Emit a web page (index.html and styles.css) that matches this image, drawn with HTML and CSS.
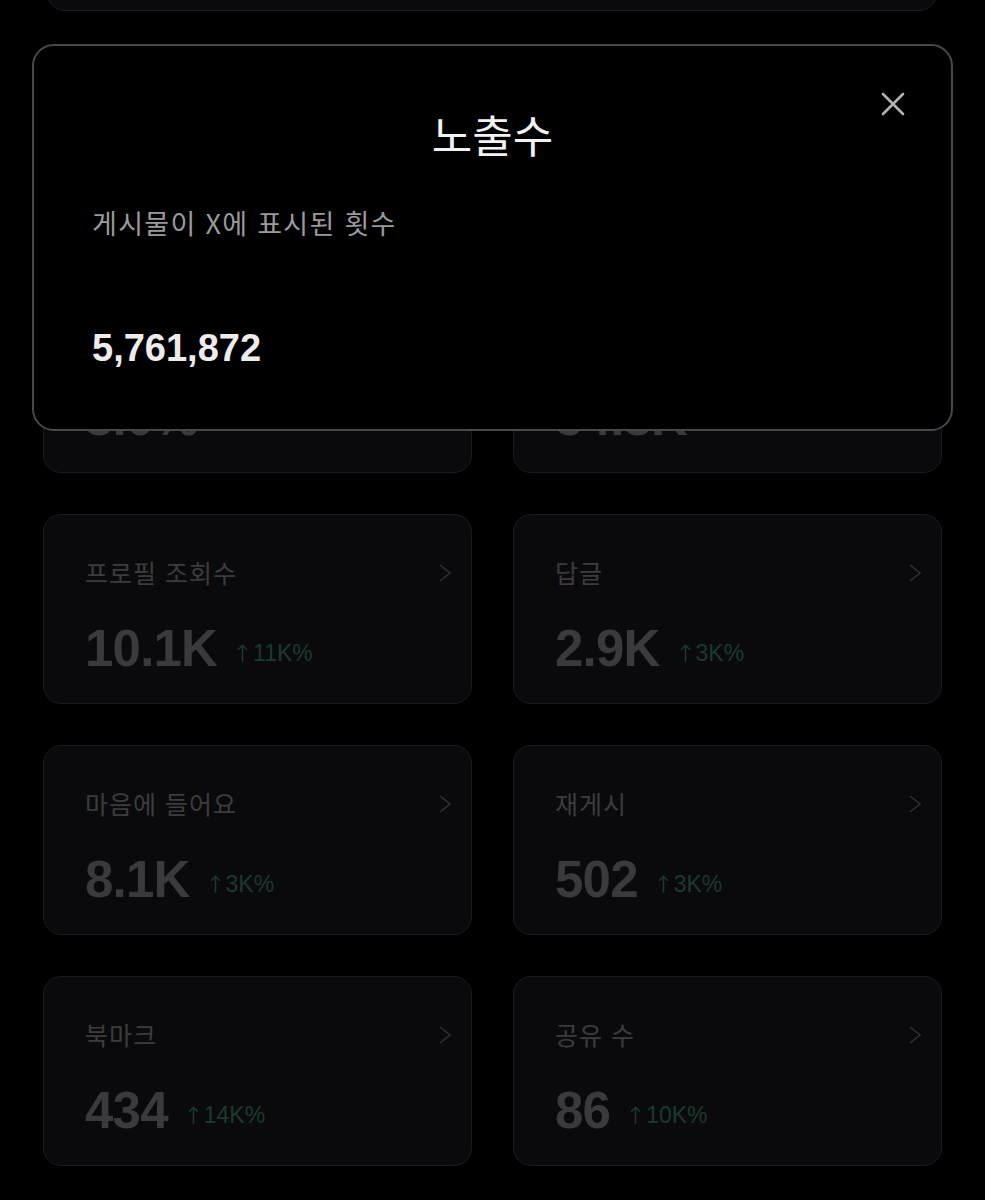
FILE: index.html
```html
<!DOCTYPE html>
<html lang="ko">
<head>
    <meta charset="UTF-8">
    <meta name="viewport" content="width=device-width, initial-scale=1.0">
    <title>게시물 애널리틱스</title>
    <link rel="stylesheet" href="styles.css">
</head>
<body>
    <div class="screen">
        <div class="summary-card"></div>

        <div class="metrics">
            <div class="metric">
                <div class="metric-head">
                    <span class="metric-label">참여율</span>
                    <svg class="chevron" viewBox="0 0 14 20"><polyline points="2,2 12,10 2,18"/></svg>
                </div>
                <div class="metric-row">
                    <span class="metric-value">3.0%</span>
                </div>
            </div>
            <div class="metric">
                <div class="metric-head">
                    <span class="metric-label">참여수</span>
                    <svg class="chevron" viewBox="0 0 14 20"><polyline points="2,2 12,10 2,18"/></svg>
                </div>
                <div class="metric-row">
                    <span class="metric-value">54.3K</span>
                </div>
            </div>
            <div class="metric">
                <div class="metric-head">
                    <span class="metric-label">프로필 조회수</span>
                    <svg class="chevron" viewBox="0 0 14 20"><polyline points="2,2 12,10 2,18"/></svg>
                </div>
                <div class="metric-row">
                    <span class="metric-value">10.1K</span>
                    <span class="metric-change"><svg class="up" viewBox="0 0 10 18"><path d="M5 17V2M1 6l4-4 4 4"/></svg>11K%</span>
                </div>
            </div>
            <div class="metric">
                <div class="metric-head">
                    <span class="metric-label">답글</span>
                    <svg class="chevron" viewBox="0 0 14 20"><polyline points="2,2 12,10 2,18"/></svg>
                </div>
                <div class="metric-row">
                    <span class="metric-value">2.9K</span>
                    <span class="metric-change"><svg class="up" viewBox="0 0 10 18"><path d="M5 17V2M1 6l4-4 4 4"/></svg>3K%</span>
                </div>
            </div>
            <div class="metric">
                <div class="metric-head">
                    <span class="metric-label">마음에 들어요</span>
                    <svg class="chevron" viewBox="0 0 14 20"><polyline points="2,2 12,10 2,18"/></svg>
                </div>
                <div class="metric-row">
                    <span class="metric-value">8.1K</span>
                    <span class="metric-change"><svg class="up" viewBox="0 0 10 18"><path d="M5 17V2M1 6l4-4 4 4"/></svg>3K%</span>
                </div>
            </div>
            <div class="metric">
                <div class="metric-head">
                    <span class="metric-label">재게시</span>
                    <svg class="chevron" viewBox="0 0 14 20"><polyline points="2,2 12,10 2,18"/></svg>
                </div>
                <div class="metric-row">
                    <span class="metric-value">502</span>
                    <span class="metric-change"><svg class="up" viewBox="0 0 10 18"><path d="M5 17V2M1 6l4-4 4 4"/></svg>3K%</span>
                </div>
            </div>
            <div class="metric">
                <div class="metric-head">
                    <span class="metric-label">북마크</span>
                    <svg class="chevron" viewBox="0 0 14 20"><polyline points="2,2 12,10 2,18"/></svg>
                </div>
                <div class="metric-row">
                    <span class="metric-value">434</span>
                    <span class="metric-change"><svg class="up" viewBox="0 0 10 18"><path d="M5 17V2M1 6l4-4 4 4"/></svg>14K%</span>
                </div>
            </div>
            <div class="metric">
                <div class="metric-head">
                    <span class="metric-label">공유 수</span>
                    <svg class="chevron" viewBox="0 0 14 20"><polyline points="2,2 12,10 2,18"/></svg>
                </div>
                <div class="metric-row">
                    <span class="metric-value">86</span>
                    <span class="metric-change"><svg class="up" viewBox="0 0 10 18"><path d="M5 17V2M1 6l4-4 4 4"/></svg>10K%</span>
                </div>
            </div>
        </div>
    </div>

    <div class="modal">
        <button class="modal-close" aria-label="닫기">
            <svg viewBox="0 0 24 24"><line x1="2" y1="2" x2="22" y2="22"/><line x1="22" y1="2" x2="2" y2="22"/></svg>
        </button>
        <h2 class="modal-title">노출수</h2>
        <p class="modal-desc">게시물이 X에 표시된 횟수</p>
        <div class="modal-value">5,761,872</div>
    </div>
</body>
</html>
```

FILE: styles.css
```css
body {
    margin: 0;
    background-color: #000;
    font-family: "Liberation Sans", "Noto Sans CJK KR", sans-serif;
    position: relative;
    height: 1200px;
    overflow: hidden;
}

.screen {
    padding: 0 43px;
}

.summary-card {
    height: 120px;
    margin: -111px 5px 0 4px;
    border: 1px solid #1c1c1f;
    border-radius: 18px;
    background-color: #0a0a0d;
}

.metrics {
    display: grid;
    grid-template-columns: 1fr 1fr;
    column-gap: 41px;
    row-gap: 42px;
    margin-top: 272px;
}

.metric {
    box-sizing: border-box;
    height: 190px;
    padding: 43px 19px 0 41px;
    border: 1px solid #1b1b1e;
    border-radius: 18px;
    background-color: #0a0a0d;
}

.metric:nth-child(n+3) {
    margin-top: -1px;
}

.metric-head {
    display: flex;
    justify-content: space-between;
    align-items: center;
}

.metric-label {
    font-family: "Noto Sans CJK KR", sans-serif;
    font-size: 25px;
    line-height: 29px;
    letter-spacing: 1px;
    color: #3c3c3e;
}

.chevron {
    width: 14px;
    height: 20px;
    fill: none;
    stroke: #2f2f32;
    stroke-width: 1.6;
}

.metric-row {
    display: flex;
    align-items: baseline;
    gap: 20px;
    margin-top: 36px;
}

.metric-value {
    font-size: 51px;
    line-height: 1;
    font-weight: bold;
    color: #3a3a3c;
    letter-spacing: -0.8px;
}

.metric-change {
    font-size: 23px;
    line-height: 1;
    padding-bottom: 3px;
    align-self: flex-end;
    margin-bottom: 6px;
    color: #1a3a2e;
}

.metric-change .up {
    width: 11px;
    height: 20px;
    margin-right: 5px;
    vertical-align: -2px;
    fill: none;
    stroke: #1a3a2e;
    stroke-width: 1.4;
}

.modal {
    position: absolute;
    top: 44px;
    left: 32px;
    width: 921px;
    box-sizing: border-box;
    padding: 62px 58px 62px 58px;
    border: 2px solid #48484c;
    border-radius: 22px;
    background-color: #000;
}

.modal-close {
    position: absolute;
    top: 46px;
    right: 46px;
    width: 24px;
    height: 24px;
    padding: 0;
    border: none;
    background: none;
    cursor: pointer;
}

.modal-close svg {
    width: 24px;
    height: 24px;
    stroke: #b2b2b2;
    stroke-width: 2.6;
    stroke-linecap: round;
}

.modal-title {
    margin: 0;
    text-align: center;
    font-family: "Noto Sans CJK KR", sans-serif;
    font-size: 44px;
    line-height: 52px;
    font-weight: 400;
    color: #f2f2f2;
}

.modal-desc {
    margin: 46px 0 0;
    font-family: "Noto Sans CJK KR", sans-serif;
    font-size: 27px;
    line-height: 34px;
    letter-spacing: 1.3px;
    color: #9a9a9c;
}

.modal-value {
    margin-top: 89px;
    font-size: 38px;
    line-height: 1;
    font-weight: bold;
    color: #ececec;
}
```
